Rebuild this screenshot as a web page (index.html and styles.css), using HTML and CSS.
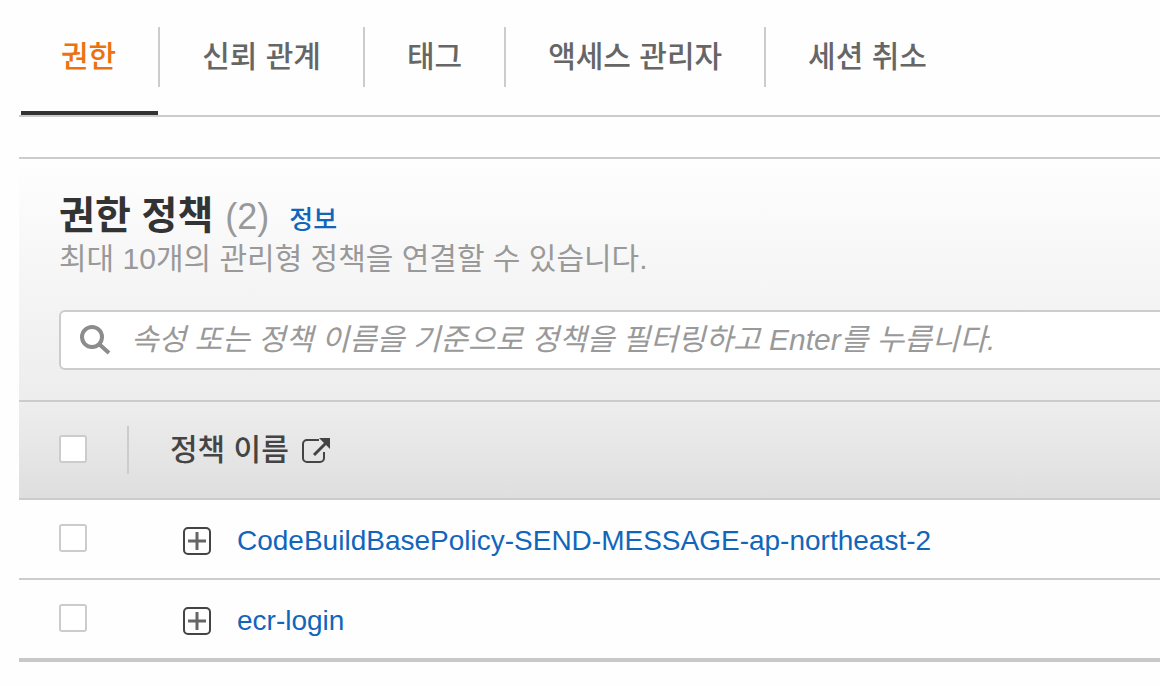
FILE: index.html
```
<!DOCTYPE html>
<html lang="ko">
<head>
    <meta charset="UTF-8">
    <meta name="viewport" content="width=device-width, initial-scale=1.0">
    <title>권한 정책</title>
    <link rel="stylesheet" href="styles.css">
</head>
<body>
    <nav class="tabs">
        <a href="#permissions" class="tab active"><span>권한</span></a>
        <a href="#trust" class="tab"><span>신뢰 관계</span></a>
        <a href="#tags" class="tab"><span>태그</span></a>
        <a href="#access-advisor" class="tab"><span>액세스 관리자</span></a>
        <a href="#revoke-sessions" class="tab"><span>세션 취소</span></a>
    </nav>

    <section class="panel" id="permissions">
        <div class="panel-header">
            <div class="panel-title">
                <h2>권한 정책</h2>
                <span class="count">(2)</span>
                <a href="#info" class="info-link">정보</a>
            </div>
            <p class="description">최대 10개의 관리형 정책을 연결할 수 있습니다.</p>
            <div class="search">
                <svg class="search-icon" viewBox="0 0 32 32" fill="none" stroke="#8c8c8c" stroke-width="4">
                    <circle cx="13" cy="13" r="10"/>
                    <path d="M20 20l10 9"/>
                </svg>
                <input type="text" class="search-input" aria-label="정책 필터링" placeholder="속성 또는 정책 이름을 기준으로 정책을 필터링하고 Enter를 누릅니다.">
            </div>
        </div>

        <table class="policies">
            <thead>
                <tr>
                    <th class="select-col"><input type="checkbox" class="checkbox" aria-label="모두 선택"></th>
                    <th class="name-col">
                        <div class="name-head">
                            <span>정책 이름</span>
                            <svg class="external-icon" viewBox="0 0 30 28" fill="none" stroke="#444" stroke-width="2">
                                <path d="M18 4H6a4 4 0 0 0-4 4v14a4 4 0 0 0 4 4h13a4 4 0 0 0 4-4v-6"/>
                                <path d="M13 19L25 7" stroke-width="3"/>
                                <path d="M18 2h11v11z" fill="#444" stroke="none"/>
                            </svg>
                        </div>
                    </th>
                </tr>
            </thead>
            <tbody>
                <tr>
                    <td class="select-col"><input type="checkbox" class="checkbox" aria-label="CodeBuildBasePolicy-SEND-MESSAGE-ap-northeast-2 선택"></td>
                    <td class="name-col">
                        <div class="policy">
                            <button type="button" class="expand-btn" aria-label="펼치기">
                                <svg viewBox="0 0 28 28" fill="none" stroke="#444">
                                    <rect x="1" y="1" width="26" height="26" rx="4" stroke-width="2"/>
                                    <path d="M5 14h18M14 5v18" stroke="#666" stroke-width="3"/>
                                </svg>
                            </button>
                            <a href="#codebuild-policy">CodeBuildBasePolicy-SEND-MESSAGE-ap-northeast-2</a>
                        </div>
                    </td>
                </tr>
                <tr>
                    <td class="select-col"><input type="checkbox" class="checkbox" aria-label="ecr-login 선택"></td>
                    <td class="name-col">
                        <div class="policy">
                            <button type="button" class="expand-btn" aria-label="펼치기">
                                <svg viewBox="0 0 28 28" fill="none" stroke="#444">
                                    <rect x="1" y="1" width="26" height="26" rx="4" stroke-width="2"/>
                                    <path d="M5 14h18M14 5v18" stroke="#666" stroke-width="3"/>
                                </svg>
                            </button>
                            <a href="#ecr-login">ecr-login</a>
                        </div>
                    </td>
                </tr>
            </tbody>
        </table>
    </section>
</body>
</html>
```
FILE: styles.css
```
* {
    box-sizing: border-box;
}

body {
    margin: 0;
    padding-left: 19px;
    background-color: #fefefe;
    font-family: "Liberation Sans", "Noto Sans CJK KR", sans-serif;
    font-size: 30px;
    color: #444;
    overflow-x: hidden;
}

a {
    color: #1166bb;
    text-decoration: none;
}

a:hover {
    text-decoration: underline;
}

/* Tabs */
.tabs {
    display: flex;
    padding-top: 27px;
    border-bottom: 2px solid #ccc;
}

.tab {
    position: relative;
    padding-bottom: 28px;
    color: #666;
    font-weight: 500;
    white-space: nowrap;
}

.tab span {
    display: block;
    padding: 0 42px;
    line-height: 60px;
    border-right: 2px solid #ccc;
}

.tab:last-child span {
    border-right: none;
}

.tab.active {
    color: #ec7211;
}

.tab.active::after {
    content: "";
    position: absolute;
    left: 2px;
    right: 2px;
    bottom: 0;
    height: 4px;
    background: #333;
}

/* Policies panel */
.panel {
    margin-top: 40px;
    border-top: 2px solid #ccc;
    border-bottom: 4px solid #c8c8c8;
}

.panel-header {
    padding: 34px 0 30px 40px;
    background: linear-gradient(#fefefe, #ededed);
}

.panel-title {
    display: flex;
    align-items: baseline;
    line-height: 46px;
}

.panel-title h2 {
    margin: 0;
    font-size: 39px;
    font-weight: 700;
    color: #333;
}

.count {
    margin-left: 12px;
    font-size: 36px;
    color: #999;
}

.info-link {
    margin-left: 20px;
    font-size: 26px;
    font-weight: 500;
}

.description {
    margin: 0 0 35px;
    line-height: 32px;
    color: #999;
}

.search {
    display: flex;
    align-items: center;
    height: 60px;
    padding-left: 18px;
    background: #fff;
    border: 2px solid #ccc;
    border-right: none;
    border-radius: 6px 0 0 6px;
}

.search-icon {
    width: 32px;
    height: 32px;
}

.search-input {
    flex: 1;
    height: 56px;
    margin-left: 20px;
    padding: 0;
    border: none;
    outline: none;
    background: none;
    font-family: inherit;
    font-size: 30px;
    font-style: italic;
    color: #444;
}

.search-input::placeholder {
    color: #999;
}

/* Table */
.policies {
    width: 100%;
    border-collapse: separate;
    border-spacing: 0;
    text-align: left;
}

.policies thead tr {
    background: linear-gradient(#eee, #dedede);
}

.policies th {
    height: 100px;
    padding: 0;
    border-top: 2px solid #ccc;
    border-bottom: 2px solid #ccc;
    font-weight: 500;
}

.policies td {
    height: 80px;
    padding: 0;
    border-bottom: 2px solid #ccc;
}

.policies tbody tr:last-child td {
    height: 78px;
    border-bottom: none;
}

.policies .select-col {
    width: 108px;
    padding-left: 40px;
    padding-bottom: 2px;
}

.checkbox {
    appearance: none;
    display: block;
    width: 28px;
    height: 28px;
    margin: 0;
    background: #fff;
    border: 2px solid #ccc;
    border-radius: 3px;
}

.checkbox:checked {
    background: #1166bb;
}

.name-head {
    display: flex;
    align-items: center;
    height: 48px;
    padding-left: 41px;
    border-left: 2px solid #ccc;
}

.name-head span {
    padding-bottom: 6px;
}

.external-icon {
    width: 30px;
    height: 28px;
    margin-left: 12px;
}

.policy {
    display: flex;
    align-items: center;
    gap: 26px;
    padding-top: 4px;
    padding-left: 56px;
    font-size: 28px;
}

.expand-btn {
    width: 28px;
    height: 28px;
    padding: 0;
    border: none;
    background: none;
    cursor: pointer;
}

.expand-btn svg {
    display: block;
    width: 28px;
    height: 28px;
}
```
